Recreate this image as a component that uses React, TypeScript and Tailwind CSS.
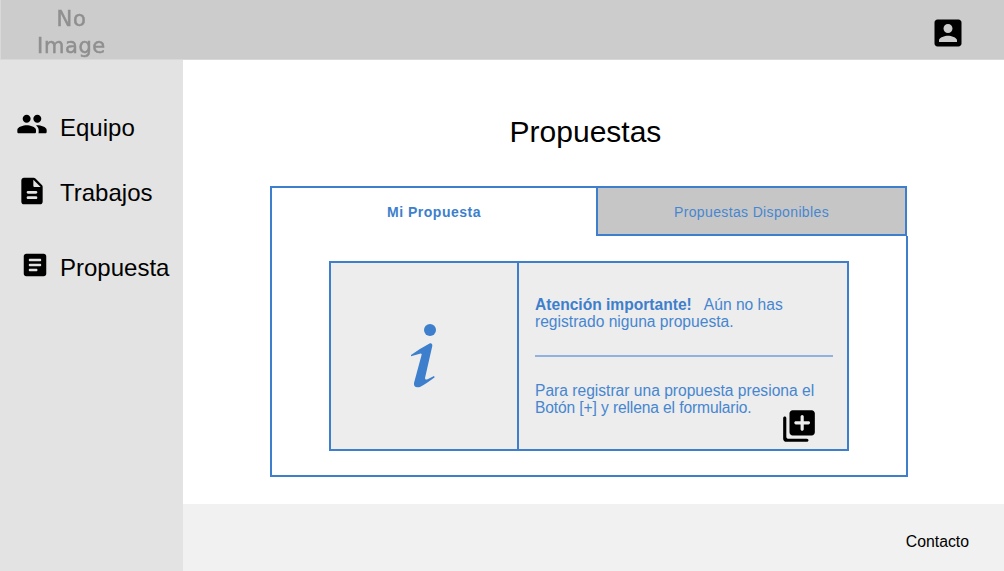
const blue = "text-[#3d7fcc]";
const lightBlue = "text-[#4686d0]";

function Icon({ d, size, className }: { d: string; size: number; className?: string }) {
  return (
    <svg width={size} height={size} viewBox="0 0 24 24" fill="currentColor" className={className}>
      <path d={d} />
    </svg>
  );
}

const PEOPLE =
  "M16 11c1.66 0 2.99-1.34 2.99-3S17.66 5 16 5s-3 1.34-3 3 1.34 3 3 3zm-8 0c1.66 0 2.99-1.34 2.99-3S9.66 5 8 5 5 6.34 5 8s1.34 3 3 3zm0 2c-2.33 0-7 1.17-7 3.5V18c0 .55.45 1 1 1h12c.55 0 1-.45 1-1v-1.5c0-2.33-4.67-3.5-7-3.5zm8 0c-.29 0-.62.02-.97.05.02.01.03.03.04.04 1.14.83 1.93 1.94 1.93 3.41V18c0 .35-.07.69-.18 1H22c.55 0 1-.45 1-1v-1.5c0-2.33-4.67-3.5-7-3.5z";
const DESCRIPTION =
  "M14.59 2.59c-.38-.38-.89-.59-1.42-.59H6c-1.1 0-2 .9-2 2v16c0 1.1.89 2 1.99 2H18c1.1 0 2-.9 2-2V8.83c0-.53-.21-1.04-.59-1.41l-4.82-4.83zM15 18H9c-.55 0-1-.45-1-1s.45-1 1-1h6c.55 0 1 .45 1 1s-.45 1-1 1zm0-4H9c-.55 0-1-.45-1-1s.45-1 1-1h6c.55 0 1 .45 1 1s-.45 1-1 1zm-2-6V3.5L18.5 9H14c-.55 0-1-.45-1-1z";
const ARTICLE =
  "M19 3H5c-1.1 0-2 .9-2 2v14c0 1.1.9 2 2 2h14c1.1 0 2-.9 2-2V5c0-1.1-.9-2-2-2zm-6 14H8c-.55 0-1-.45-1-1s.45-1 1-1h5c.55 0 1 .45 1 1s-.45 1-1 1zm3-4H8c-.55 0-1-.45-1-1s.45-1 1-1h8c.55 0 1 .45 1 1s-.45 1-1 1zm0-4H8c-.55 0-1-.45-1-1s.45-1 1-1h8c.55 0 1 .45 1 1s-.45 1-1 1z";
const ACCOUNT_BOX =
  "M3 5v14c0 1.1.89 2 2 2h14c1.1 0 2-.9 2-2V5c0-1.1-.9-2-2-2H5c-1.11 0-2 .9-2 2zm12 4c0 1.66-1.34 3-3 3s-3-1.34-3-3 1.34-3 3-3 3 1.34 3 3zm-9 8c0-2 4-3.1 6-3.1s6 1.1 6 3.1v1H6v-1z";
const LIBRARY_ADD =
  "M3 6c-.55 0-1 .45-1 1v13c0 1.1.9 2 2 2h13c.55 0 1-.45 1-1s-.45-1-1-1H5c-.55 0-1-.45-1-1V7c0-.55-.45-1-1-1zm17-4H8c-1.1 0-2 .9-2 2v12c0 1.1.9 2 2 2h12c1.1 0 2-.9 2-2V4c0-1.1-.9-2-2-2zm-2 9h-3v3c0 .55-.45 1-1 1s-1-.45-1-1v-3h-3c-.55 0-1-.45-1-1s.45-1 1-1h3V6c0-.55.45-1 1-1s1 .45 1 1v3h3c.55 0 1 .45 1 1s-.45 1-1 1z";

export default function App() {
  return (
    <div className="flex h-[571px] w-[1004px] flex-col overflow-hidden bg-white font-['Liberation_Sans',sans-serif] text-black">
      <header className="flex h-[60px] shrink-0 items-center justify-between border-b border-l border-b-[#d8d8d8] border-l-[#d9d9d9] bg-[#cccccc] pr-[38px]">
        <div className="ml-[36px] mt-[6px] w-[69px] text-center font-['DejaVu_Sans',sans-serif] text-[21px] font-medium leading-[27px] tracking-[0.6px] text-[#8f8f8f] blur-[0.7px] [-webkit-text-stroke:0.5px_#8f8f8f]">
          No Image
        </div>
        <Icon d={ACCOUNT_BOX} size={36} className="mt-[6px]" />
      </header>

      <div className="flex min-h-0 flex-1">
        <aside className="w-[183px] shrink-0 bg-[#e3e3e3] pt-[44px] text-2xl">
          <div className="flex h-[48px] items-center pl-[16px]">
            <Icon d={PEOPLE} size={32} className="mb-[8px]" />
            <span className="ml-[12px]">Equipo</span>
          </div>
          <div className="mt-[17px] flex h-[48px] items-center pl-[16px]">
            <Icon d={DESCRIPTION} size={32} className="mb-[4px]" />
            <span className="ml-[12px]">Trabajos</span>
          </div>
          <div className="mt-[27px] flex h-[48px] items-center pl-[20px]">
            <Icon d={ARTICLE} size={30} className="mb-[6px]" />
            <span className="ml-[10px]">Propuesta</span>
          </div>
        </aside>

        <div className="flex min-w-0 flex-1 flex-col">
          <main className="flex flex-1 flex-col">
            <h1 className="mt-[54px] h-[36px] pr-[16px] text-center text-[30px] leading-[36px]">Propuestas</h1>
            <section className="ml-[87px] mt-[36px] h-[291px] w-[638px] border-2 border-[#3d7fcc]">
              <div className="flex h-[48px]">
                <div className={`flex w-[324px] items-center justify-center text-sm font-bold tracking-[0.5px] ${blue}`}>
                  Mi Propuesta
                </div>
                <div className={`relative flex flex-1 items-center justify-center border-b-2 border-l-2 border-r border-[#3d7fcc] bg-[#c6c6c6] pt-[1px] text-sm tracking-[0.36px] ${lightBlue}`}>
                  Propuestas Disponibles
                  {/* tab sits 1px short of the card's right edge */}
                  <span className="absolute -right-[3px] -top-[2px] h-[50px] w-[1px] bg-white" />
                </div>
              </div>
              <div className="relative ml-[57px] mt-[25px] flex h-[190px] w-[520px] border-2 border-[#3d7fcc] bg-[#ededed]">
                <div className="flex w-[188px] shrink-0 items-center justify-center border-r-2 border-[#3d7fcc]">
                  <svg width={30} height={70} viewBox="0 0 30 70" fill="#3d7fcc">
                    <circle cx={21} cy={9} r={6} />
                    <path d="M2 34 Q12 27 21 22.3 Q23.5 22 23.3 25 L16 57 Q16 59 18 58.4 L25 55 L25.7 56.3 Q17 63 11 66 Q4.5 67.5 5 62 L12.7 33.5 Q12.5 32 10 33 L2 35.3 Z" />
                  </svg>
                </div>
                <div className={`flex-1 pl-[16px] pr-[14px] pt-[33px] text-[15.6px] leading-[17px] ${lightBlue}`}>
                  <p>
                    <b className={blue}>Atención importante!</b>
                    <span className="ml-[12px]">Aún no has</span>
                    <br />
                    registrado niguna propuesta.
                  </p>
                  <div className="mt-[25px] h-[2px] bg-[#8fb3de]" />
                  <p className="mt-[25px]">
                    Para registrar una propuesta presiona el
                    <br />
                    <span className="tracking-[-0.12px]">Botón [+] y rellena el formulario.</span>
                  </p>
                </div>
                <Icon d={LIBRARY_ADD} size={38} className="absolute right-[29px] top-[144px] text-black" />
              </div>
            </section>
          </main>
          <footer className="flex h-[67px] shrink-0 items-center justify-end bg-[#f1f1f1] pr-[35px] pt-[8px] text-[15.8px]">
            Contacto
          </footer>
        </div>
      </div>
    </div>
  );
}
